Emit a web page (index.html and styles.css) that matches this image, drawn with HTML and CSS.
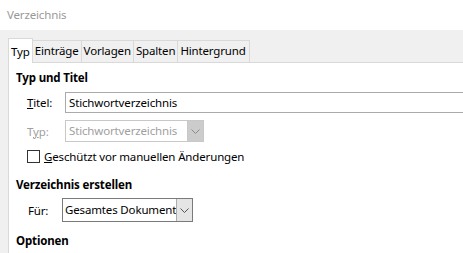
FILE: index.html
```html
<!DOCTYPE html>
<html lang="de">

<head>
    <meta charset="UTF-8">
    <meta name="viewport" content="width=device-width, initial-scale=1.0">
    <title>Verzeichnis</title>
    <link rel="stylesheet" href="styles.css">
</head>

<body>
    <div class="titlebar">Verzeichnis</div>

    <div class="dialog">
        <div class="tabs">
            <div class="tab active">Typ</div>
            <div class="tab">Einträge</div>
            <div class="tab">Vorlagen</div>
            <div class="tab">Spalten</div>
            <div class="tab">Hintergrund</div>
        </div>

        <div class="panel">
            <h2>Typ und Titel</h2>
            <div class="row">
                <label class="label"><u>T</u>itel:</label>
                <div class="field">Stichwortverzeichnis</div>
            </div>
            <div class="row disabled">
                <label class="label">T<u>y</u>p:</label>
                <div class="select select-type">
                    <span class="select-text">Stichwortverzeichnis</span>
                    <span class="select-btn">
                        <svg width="9" height="5" viewBox="0 0 9 5"><polyline points="0.5,0.5 4.5,4.5 8.5,0.5" fill="none" stroke="#8a8a8a" stroke-width="1"/></svg>
                    </span>
                </div>
            </div>
            <div class="check-row">
                <span class="checkbox"></span>
                <span><u>G</u>eschützt vor manuellen Änderungen</span>
            </div>

            <h2>Verzeichnis erstellen</h2>
            <div class="row row-for">
                <label class="label">Für:</label>
                <div class="select select-for">
                    <span class="select-text">Gesamtes Dokument</span>
                    <span class="select-btn">
                        <svg width="9" height="5" viewBox="0 0 9 5"><polyline points="0.5,0.5 4.5,4.5 8.5,0.5" fill="none" stroke="#555" stroke-width="1"/></svg>
                    </span>
                </div>
            </div>

            <h2>Optionen</h2>
        </div>
    </div>
</body>

</html>
```

FILE: styles.css
```css
body {
    font-family: "Noto Sans", "Open Sans", sans-serif;
    font-size: 11.5px;
    letter-spacing: -0.15px;
    color: #000;
    background-color: #fff;
    margin: 0;
    padding: 0;
    overflow: hidden;
    white-space: nowrap;
}

.titlebar {
    height: 30px;
    line-height: 30px;
    padding-left: 7px;
    color: #999;
    background-color: #fff;
}

.dialog {
    display: flex;
    flex-direction: column;
    background-color: #f0f0f0;
    padding: 8px 0 0 8px;
    height: 223px;
    box-sizing: border-box;
}

.tabs {
    display: flex;
    align-items: flex-end;
    height: 24px;
    flex-shrink: 0;
}

.tab {
    height: 21px;
    line-height: 20px;
    padding: 0 2px;
    border: 1px solid #d9d9d9;
    border-bottom: none;
    border-left: none;
    background-color: #f0f0f0;
}

.tab:last-child {
    padding-right: 3px;
}

.tab.active {
    height: 24px;
    line-height: 25px;
    background-color: #fff;
    border-left: 1px solid #d9d9d9;
    margin-bottom: -1px;
    position: relative;
}

.panel {
    flex: 1;
    background-color: #fff;
    border-top: 1px solid #d9d9d9;
    border-left: 1px solid #d9d9d9;
    padding: 7px 0 0 7px;
    overflow: hidden;
}

h2 {
    font-size: 11.5px;
    font-weight: bold;
    margin: 0;
    line-height: 16px;
}

.row {
    display: flex;
    align-items: center;
    margin: 6px 0 7px 11px;
}

.label {
    width: 38px;
}

.disabled {
    color: #a0a0a0;
}

.field {
    flex: 1;
    height: 21px;
    line-height: 19px;
    border: 1px solid #aaa;
    border-right: none;
    padding-left: 3px;
    box-sizing: border-box;
}

.select {
    display: flex;
    height: 22px;
    border: 1px solid #b0b0b0;
    box-sizing: border-box;
}

.select-type {
    width: 139px;
    border-color: #c8c8c8;
}

.select-text {
    flex: 1;
    line-height: 20px;
    padding-left: 3px;
}

.select-btn {
    width: 15px;
    display: flex;
    align-items: center;
    justify-content: center;
    border-left: 1px solid #c8c8c8;
    background-color: #cccccc;
}

.check-row {
    display: flex;
    align-items: center;
    margin: 0 0 14px 11px;
    height: 14px;
}

.checkbox {
    width: 11px;
    height: 11px;
    border: 1px solid #333;
    margin-right: 4px;
}

.row-for {
    margin: 5px 0 11px 12px;
}

.row-for .label {
    width: 34px;
}

.select-for {
    width: 131px;
    height: 24px;
    border-color: #7a7a7a;
}

.select-for .select-text {
    line-height: 22px;
    padding-left: 2px;
}

.select-for .select-btn {
    width: 17px;
    background-color: #e5e5e5;
    border-left-color: #adadad;
}
```
